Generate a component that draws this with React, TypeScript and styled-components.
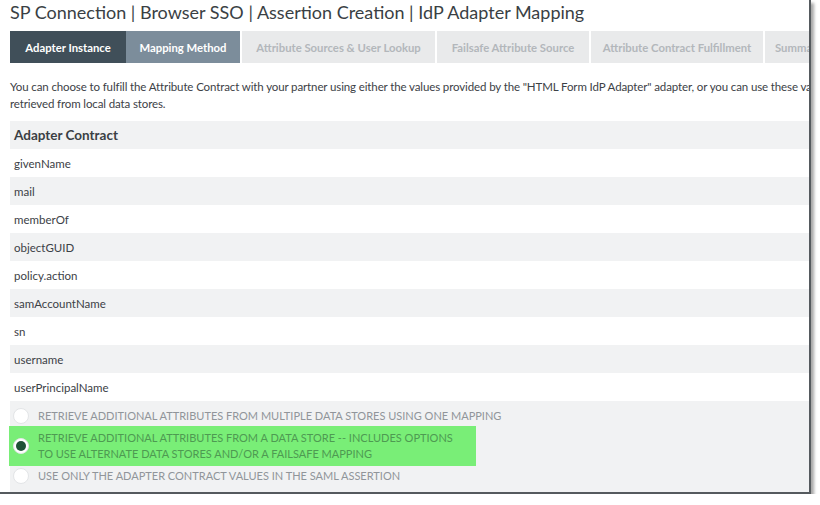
import React from "react";
import styled, { createGlobalStyle } from "styled-components";

const Global = createGlobalStyle`
  html, body { margin: 0; padding: 0; background: #ffffff; }
  body { font-family: Lato, "Open Sans", "Liberation Sans", sans-serif; }
  * { box-sizing: border-box; }
`;

const Frame = styled.div`
  width: 811px;
  height: 494px;
  background: #ffffff;
  border-right: 2px solid #555a5e;
  border-bottom: 2px solid #555a5e;
  box-shadow: 3px 3px 3px rgba(0, 0, 0, 0.35);
  overflow: hidden;
  padding-left: 10px;
  display: flex;
  flex-direction: column;
`;

const Title = styled.h1`
  margin: 0;
  height: 31px;
  padding-top: 0;
  font-size: 18px;
  font-weight: 400;
  color: #3a3f44;
  line-height: 24px;
  white-space: nowrap;
`;

const Tabs = styled.div`
  display: flex;
  height: 32px;
  gap: 2px;
  white-space: nowrap;
`;

const Tab = styled.div<{ $variant: "active" | "current" | "idle"; $w: number }>`
  flex: 0 0 ${(p) => p.$w}px;
  display: flex;
  align-items: center;
  font-size: 11.3px;
  font-weight: 700;
  overflow: hidden;
  margin-right: ${(p) => (p.$variant === "active" ? "-2px" : "0")};
  background: ${(p) =>
    p.$variant === "active" ? "#404f59" : p.$variant === "current" ? "#7c8d9b" : "#e9eaeb"};
  color: ${(p) => (p.$variant === "idle" ? "#b3b7bb" : "#ffffff")};
  justify-content: ${(p) => (p.$w < 60 ? "flex-start" : "center")};
  padding-left: ${(p) => (p.$w < 60 ? "10px" : "0")};
`;

const Intro = styled.p`
  margin: 0;
  padding: 15px 0 0 0;
  height: 58px;
  font-size: 11.5px;
  line-height: 17px;
  letter-spacing: -0.12px;
  color: #3c4146;
  white-space: nowrap;
`;

const Table = styled.div`
  display: flex;
  flex-direction: column;
`;

const HeadRow = styled.div`
  height: 28px;
  display: flex;
  align-items: center;
  padding-left: 4px;
  background: #f1f2f3;
  font-size: 13.5px;
  font-weight: 700;
  color: #3a3f44;
`;

const Row = styled.div<{ $shaded: boolean }>`
  height: 28px;
  display: flex;
  align-items: center;
  padding-left: 4px;
  background: ${(p) => (p.$shaded ? "#f1f2f3" : "#ffffff")};
  font-size: 11.5px;
  color: #3c4146;
`;

const Options = styled.div`
  flex: 1;
  background: #f1f2f3;
  padding-top: 5px;
  display: flex;
  flex-direction: column;
`;

const Option = styled.div<{ $selected: boolean }>`
  display: flex;
  align-items: center;
  gap: 9px;
  width: ${(p) => (p.$selected ? "467px" : "auto")};
  margin-left: -1px;
  padding: ${(p) => (p.$selected ? "4px 0 4px 4px" : "2px 0 2px 4px")};
  background: ${(p) => (p.$selected ? "#79ee77" : "transparent")};
  color: ${(p) => (p.$selected ? "#4e9a52" : "#90959a")};
  font-size: 11px;
  line-height: 16px;
  text-transform: uppercase;
`;

const Radio = styled.span<{ $checked: boolean }>`
  flex: 0 0 16px;
  width: 16px;
  height: 16px;
  border-radius: 50%;
  background: #ffffff;
  border: 1px solid #e3e5e7;
  display: flex;
  align-items: center;
  justify-content: center;
  &::after {
    content: "";
    display: ${(p) => (p.$checked ? "block" : "none")};
    width: 10px;
    height: 10px;
    border-radius: 50%;
    background: #1f5236;
  }
`;

const OptionText = styled.span`
  white-space: nowrap;
`;

const tabs: { label: string; w: number; v: "active" | "current" | "idle" }[] = [
  { label: "Adapter Instance", w: 116, v: "active" },
  { label: "Mapping Method", w: 114, v: "current" },
  { label: "Attribute Sources & User Lookup", w: 193, v: "idle" },
  { label: "Failsafe Attribute Source", w: 152, v: "idle" },
  { label: "Attribute Contract Fulfillment", w: 172, v: "idle" },
  { label: "Summary", w: 49, v: "idle" },
];

const attrs = [
  "givenName",
  "mail",
  "memberOf",
  "objectGUID",
  "policy.action",
  "samAccountName",
  "sn",
  "username",
  "userPrincipalName",
];

const options = [
  { text: ["Retrieve additional attributes from multiple data stores using one mapping"], sel: false },
  {
    text: [
      "Retrieve additional attributes from a data store -- includes options",
      "to use alternate data stores and/or a failsafe mapping",
    ],
    sel: true,
  },
  { text: ["Use only the Adapter Contract values in the SAML assertion"], sel: false },
];

export default function App() {
  return (
    <>
      <Global />
      <Frame>
        <Title>SP Connection | Browser SSO | Assertion Creation | IdP Adapter Mapping</Title>
        <Tabs>
          {tabs.map((t) => (
            <Tab key={t.label} $variant={t.v} $w={t.w}>
              {t.label}
            </Tab>
          ))}
        </Tabs>
        <Intro>
          You can choose to fulfill the Attribute Contract with your partner using either the values provided by the "HTML Form IdP Adapter" adapter, or you can use these values plus additional attributes
          <br />
          retrieved from local data stores.
        </Intro>
        <Table>
          <HeadRow>Adapter Contract</HeadRow>
          {attrs.map((a, i) => (
            <Row key={a} $shaded={i % 2 === 1}>
              {a}
            </Row>
          ))}
        </Table>
        <Options>
          {options.map((o, i) => (
            <Option key={i} $selected={o.sel}>
              <Radio $checked={o.sel} />
              <OptionText>
                {o.text.map((line, j) => (
                  <React.Fragment key={j}>
                    {j > 0 && <br />}
                    {line}
                  </React.Fragment>
                ))}
              </OptionText>
            </Option>
          ))}
        </Options>
      </Frame>
    </>
  );
}
